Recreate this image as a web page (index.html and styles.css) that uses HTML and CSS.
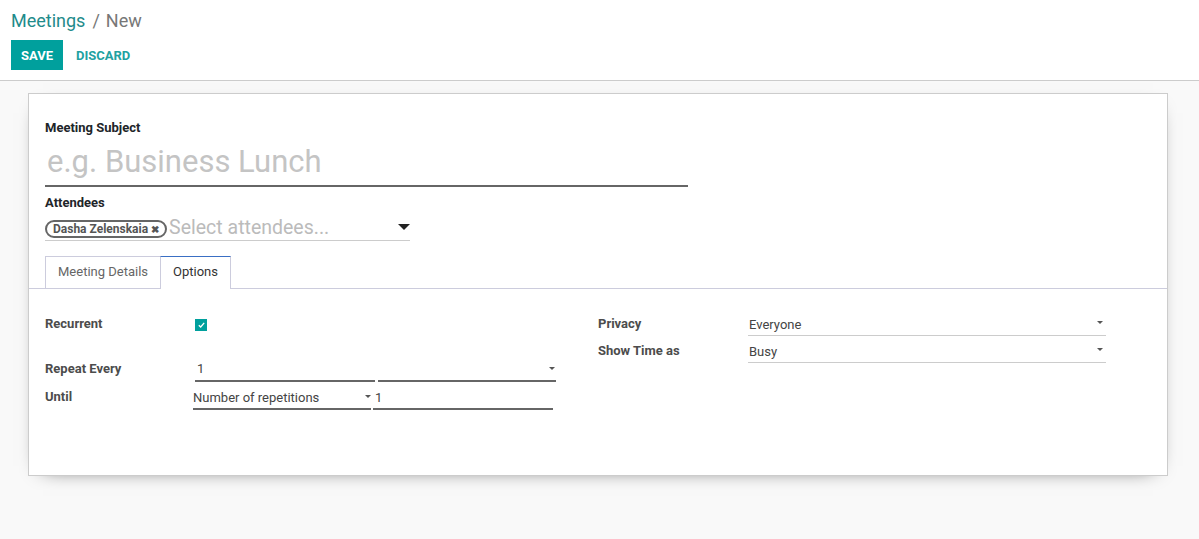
FILE: index.html
```html
<!DOCTYPE html>
<html>
<head>
<meta charset="utf-8">
<link rel="stylesheet" href="styles.css">
</head>
<body>
<div class="control-panel">
  <div class="breadcrumb"><span class="crumb-link">Meetings</span><span class="crumb-sep">/</span><span class="crumb-active">New</span></div>
  <div class="buttons">
    <button class="btn-save">SAVE</button>
    <button class="btn-discard">DISCARD</button>
  </div>
</div>
<div class="content">
  <div class="sheet">
    <div class="sheet-top">
      <div class="label dark">Meeting Subject</div>
      <div class="title-input">e.g. Business Lunch</div>
      <div class="label dark attendees-label">Attendees</div>
      <div class="many2many">
        <span class="tag">Dasha Zelenskaia <span class="tag-x">✖</span></span>
        <span class="m2m-placeholder">Select attendees...</span>
        <span class="big-caret"></span>
      </div>
    </div>
    <div class="tabs">
      <div class="tab">Meeting Details</div>
      <div class="tab active">Options</div>
    </div>
    <div class="pane">
      <div class="group left">
        <div class="row recurrent-row">
          <div class="olabel">Recurrent</div>
          <div class="value"><span class="checkbox"><svg width="7" height="6" viewBox="0 0 7 6"><path d="M0.8 3.2 L2.7 5 L6.2 0.9" fill="none" stroke="#fff" stroke-width="1.3"/></svg></span></div>
        </div>
        <div class="row repeat-row">
          <div class="olabel">Repeat Every</div>
          <div class="value split">
            <div class="field dark-line w180">1</div>
            <div class="field dark-line w178 select"><span class="caret"></span></div>
          </div>
        </div>
        <div class="row until-row">
          <div class="olabel">Until</div>
          <div class="value split until">
            <div class="field dark-line w178 select">Number of repetitions<span class="caret"></span></div>
            <div class="field dark-line w180 num">1</div>
          </div>
        </div>
      </div>
      <div class="group right">
        <div class="row r1">
          <div class="olabel">Privacy</div>
          <div class="field light-line rsel select">Everyone<span class="caret"></span></div>
        </div>
        <div class="row r2">
          <div class="olabel">Show Time as</div>
          <div class="field light-line rsel select">Busy<span class="caret"></span></div>
        </div>
      </div>
    </div>
  </div>
</div>
</body>
</html>
```
FILE: styles.css
```css
* { box-sizing: border-box; }
html, body { margin: 0; padding: 0; }
body {
  font-family: Roboto, "Noto Sans", sans-serif;
  font-size: 13px;
  color: #4c4c4c;
  background: #f9f9f9;
  width: 1199px;
  height: 539px;
  overflow: hidden;
}
.control-panel {
  background: #fff;
  border-bottom: 1px solid #ccc;
  height: 81px;
  padding: 9px 11px 0;
}
.breadcrumb {
  font-size: 18px;
  line-height: 24px;
  height: 24px;
}
.crumb-link { color: #1f8b8b; }
.crumb-sep { color: #777; margin: 0 6px 0 7px; }
.crumb-active { color: #777; }
.buttons {
  margin-top: 7px;
  display: flex;
  align-items: center;
}
.btn-save {
  background: #00a09d;
  color: #fff;
  border: 0;
  font-family: inherit;
  font-weight: bold;
  font-size: 13px;
  width: 52px;
  height: 30px;
  padding: 0;
}
.btn-discard {
  background: none;
  border: 0;
  color: #21a1a1;
  font-family: inherit;
  font-weight: bold;
  font-size: 13px;
  margin-left: 13px;
  padding: 0;
}
.content {
  padding: 12px 31px 0 28px;
}
.sheet {
  background: #fff;
  border: 1px solid #ccc;
  height: 383px;
  box-shadow: 0 5px 20px -15px #000;
}
.sheet-top {
  padding: 26px 16px 0 16px;
}
.label {
  font-weight: bold;
  line-height: 16px;
}
.dark { color: #212529; }
.title-input {
  width: 643px;
  font-size: 31px;
  line-height: 40px;
  height: 51px;
  color: #c4c4c4;
  padding: 6px 0 0 2px;
  border-bottom: 2px solid #666;
}
.attendees-label { margin-top: 8px; }
.many2many {
  width: 365px;
  margin-top: 9px;
  height: 21px;
  border-bottom: 1px solid #ccc;
  display: flex;
  align-items: flex-start;
  position: relative;
}
.tag {
  border: 2px solid #666;
  border-radius: 10px;
  font-size: 12px;
  font-weight: bold;
  color: #555;
  height: 18px;
  line-height: 14px;
  padding: 0 6px 0 6px;
  white-space: nowrap;
}
.tag-x { font-size: 10px; color: #555; }
.m2m-placeholder {
  font-size: 19.5px;
  line-height: 20px;
  color: #bbb;
  margin-left: 2px;
  margin-top: -2px;
}
.big-caret {
  position: absolute;
  right: 0;
  top: 4px;
  width: 0;
  height: 0;
  border-left: 6px solid transparent;
  border-right: 6px solid transparent;
  border-top: 6px solid #222;
}
.tabs {
  margin-top: 15px;
  padding-left: 16px;
  display: flex;
  border-bottom: 1px solid #ccd;
  height: 33px;
}
.tab {
  height: 32px;
  line-height: 30px;
  padding: 0 12px 0 12px;
  border: 1px solid #ccd;
  border-bottom: 0;
  color: #666;
  background: #fff;
}
.tab.active {
  border-top: 1px solid #3a6fc4;
  color: #333;
  height: 33px;
  margin-left: -1px;
  padding: 0 12px;
}
.pane {
  display: flex;
  padding: 0 16px;
}
.group.left { width: 553px; }
.group.right { flex: 1; }
.row { display: flex; align-items: flex-start; }
.olabel {
  font-weight: bold;
  color: #4c4c4c;
  width: 148px;
  flex-shrink: 0;
  line-height: 16px;
}
.recurrent-row { margin-top: 27px; height: 45px; }
.checkbox {
  display: inline-block;
  width: 12px;
  height: 12px;
  background: #00a09d;
  margin: 2px 0 0 2px;
  text-align: center;
  line-height: 10px;
}
.checkbox svg { vertical-align: middle; }
.field {
  position: relative;
  line-height: 16px;
  color: #444;
  height: 21px;
}
.dark-line { border-bottom: 2px solid #666; }
.light-line { border-bottom: 1px solid #ccc; }
.split { display: flex; gap: 3px; }
.repeat-row .split { padding-left: 2px; }
.repeat-row .field { padding-left: 2px; }
.w180 { width: 180px; }
.w178 { width: 178px; }
.until-row { margin-top: 7px; }
.until-row .field.select { padding-left: 0; padding-top: 1px; }
.until-row .num { padding-top: 1px; }
.until { gap: 2px; }
.num { padding-left: 2px; }
.caret {
  position: absolute;
  right: 0;
  top: 6px;
  border-left: 3px solid transparent;
  border-right: 3px solid transparent;
  border-top: 3px solid #555;
}
.repeat-row .caret { right: 1px; }
.group.right .olabel { width: 150px; }
.r1 { margin-top: 27px; }
.r2 { margin-top: 7px; }
.rsel { width: 358px; padding-left: 1px; padding-top: 1px; height: 20px; }
.rsel .caret { right: 3px; top: 5px; }
```
